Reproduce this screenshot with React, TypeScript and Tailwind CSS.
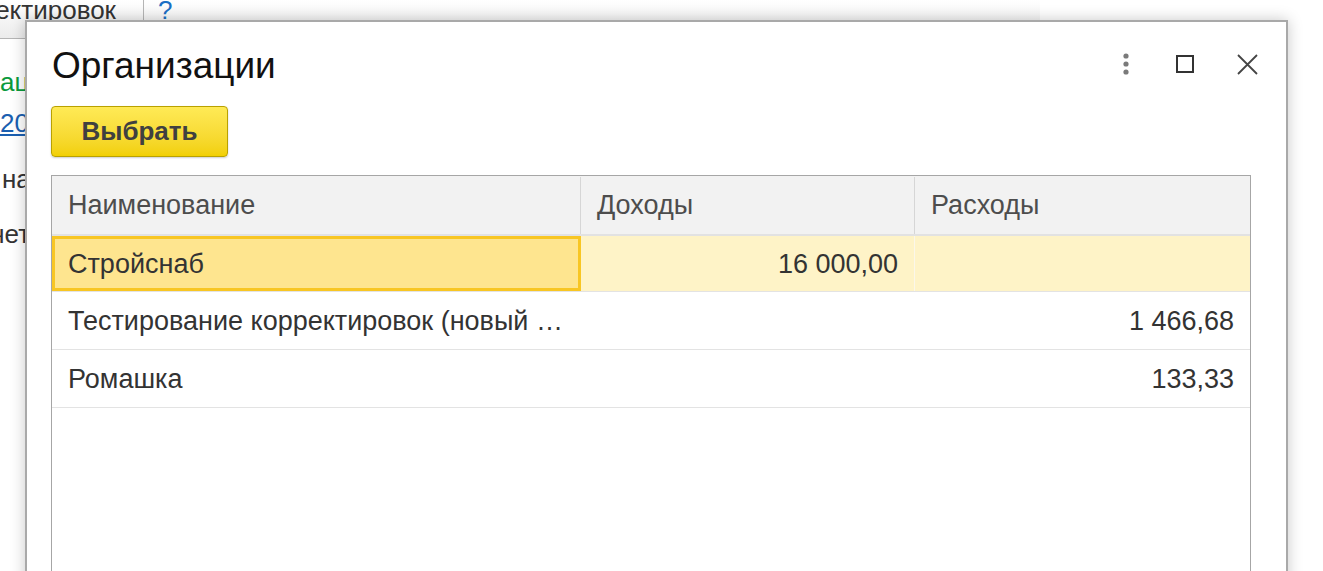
import React from "react";

const font = { fontFamily: '"Liberation Sans", Arial, sans-serif' };

function DotsIcon() {
  return (
    <svg width="8" height="24" viewBox="0 0 8 24">
      <circle cx="4" cy="4" r="2.6" fill="#7a7a7a" />
      <circle cx="4" cy="12" r="2.6" fill="#7a7a7a" />
      <circle cx="4" cy="20" r="2.6" fill="#7a7a7a" />
    </svg>
  );
}

function SquareIcon() {
  return (
    <svg width="18" height="18" viewBox="0 0 18 18">
      <rect x="1" y="1" width="16" height="16" fill="none" stroke="#333" strokeWidth="2" />
    </svg>
  );
}

function CloseIcon() {
  return (
    <svg width="21" height="21" viewBox="0 0 21 21">
      <path d="M1 1 L20 20 M20 1 L1 20" stroke="#444" strokeWidth="1.8" fill="none" />
    </svg>
  );
}

const rows = [
  { name: "Тестирование корректировок (новый …", inc: "", exp: "1 466,68" },
  { name: "Ромашка", inc: "", exp: "133,33" },
];

export default function App() {
  return (
    <div className="relative h-[571px] w-[1323px] overflow-hidden bg-white" style={font}>
      {/* background page */}
      <div className="flex h-[39px] w-[1040px] items-start border-b border-[#b5b5b5] bg-gradient-to-b from-white to-[#ececec]">
        <div className="flex h-full w-[144px] items-start justify-end overflow-hidden border-r border-[#b5b5b5] pr-[27px]">
          <span className="-mt-[4px] whitespace-nowrap text-[26px] leading-[28px] text-[#333]">ектировок</span>
        </div>
        <span className="ml-[14px] -mt-[4px] text-[26px] leading-[28px] text-[#1a6fc4]">?</span>
      </div>
      <div className="flex flex-col text-[26px] leading-[28px]">
        <span className="mt-[29px] whitespace-nowrap text-[#0a9a3c]">ации</span>
        <span className="mt-[13px] whitespace-nowrap text-[#1b5fb0] underline">2024</span>
        <span className="mt-[28px] whitespace-nowrap pl-[2px] text-[#333]">на</span>
        <span className="mt-[27px] -ml-[9px] whitespace-nowrap text-[#333]">четов</span>
      </div>

      {/* dialog window */}
      <div className="absolute left-[25px] top-[20px] h-[620px] w-[1263px] border-2 border-[#a9a9a9] bg-white shadow-[0_0_14px_rgba(0,0,0,0.22)]">
        <div className="flex h-[84px] items-center pl-[25px] pr-[28px]">
          <h1 className="pt-[3px] text-[37px] leading-[42px] text-[#111]">Организации</h1>
          <div className="ml-auto flex items-center">
            <DotsIcon />
            <div className="ml-[46px]">
              <SquareIcon />
            </div>
            <div className="ml-[43px]">
              <CloseIcon />
            </div>
          </div>
        </div>
        <div className="pl-[24px]">
          <button className="h-[51px] w-[177px] rounded-[4px] border border-[#b9a100] bg-gradient-to-b from-[#ffea55] to-[#f2d000] text-[26px] font-bold text-[#404040] shadow-[0_1px_2px_rgba(0,0,0,0.2)]">
            Выбрать
          </button>
        </div>
        <div className="ml-[24px] mt-[18px] h-[500px] w-[1200px] border border-[#a6a6a6] text-[27px]">
          <div className="flex h-[60px] border-b-2 border-[#e2e2e2] bg-[#f2f2f2] pt-[1px] text-[#4d4d4d]">
            <div className="flex w-[529px] items-center border-r border-[#d6d6d6] pl-[16px]">Наименование</div>
            <div className="flex w-[334px] items-center border-r border-[#d6d6d6] pl-[16px]">Доходы</div>
            <div className="flex flex-1 items-center pl-[16px]">Расходы</div>
          </div>
          <div className="flex h-[56px] border-b border-[#e3e3e3] bg-[#fef3c7] text-[#333]">
            <div className="flex w-[529px] items-center border-[3px] border-[#f8c623] bg-[#fee58f] pl-[13px] pt-[2px]">Стройснаб</div>
            <div className="flex w-[334px] items-center justify-end border-r border-[#fbf7ea] pr-[16px] pt-[2px]">16 000,00</div>
            <div className="flex-1"></div>
          </div>
          {rows.map((r) => (
            <div key={r.name} className="flex h-[58px] border-b border-[#e3e3e3] pt-[2px] text-[#333]">
              <div className="flex w-[529px] items-center whitespace-nowrap pl-[16px]">{r.name}</div>
              <div className="flex w-[334px] items-center justify-end pr-[16px]">{r.inc}</div>
              <div className="flex flex-1 items-center justify-end pr-[16px]">{r.exp}</div>
            </div>
          ))}
        </div>
      </div>
    </div>
  );
}
